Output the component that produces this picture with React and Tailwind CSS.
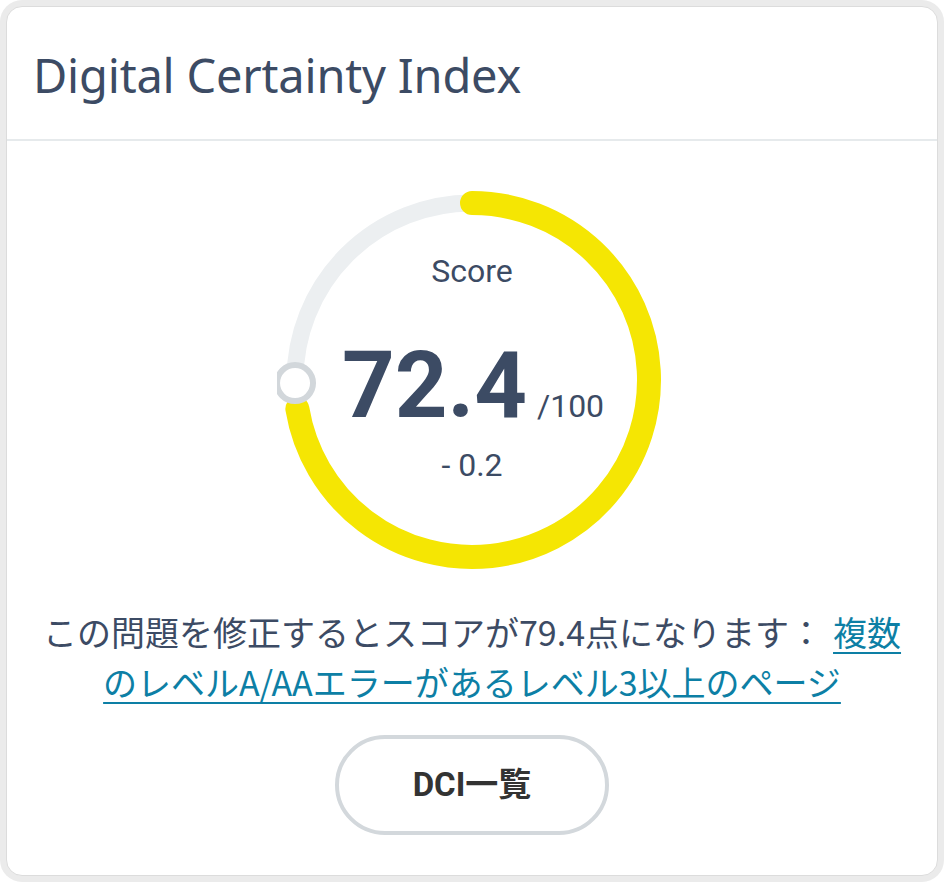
import React from 'react';

const CX = 195;
const CY = 195;
const R = 177;

function polar(deg) {
  const rad = (deg * Math.PI) / 180;
  return [CX + R * Math.sin(rad), CY - R * Math.cos(rad)];
}

function arcPath(from, to) {
  const [x1, y1] = polar(from);
  const [x2, y2] = polar(to);
  const large = to - from > 180 ? 1 : 0;
  return `M ${x1} ${y1} A ${R} ${R} 0 ${large} 1 ${x2} ${y2}`;
}

function Gauge({ score }) {
  const end = (score / 100) * 360;
  const [kx, ky] = polar(269);
  return (
    <div className="relative w-[390px] h-[390px]">
      <svg width="390" height="390" viewBox="0 0 390 390">
        <circle cx={CX} cy={CY} r={R} fill="none" stroke="#eceff1" strokeWidth="17" />
        <path d={arcPath(0, end)} fill="none" stroke="#f5e603" strokeWidth="24" strokeLinecap="round" />
        <circle cx={kx} cy={ky} r="18" fill="#fff" stroke="#d2d7db" strokeWidth="6" />
      </svg>
      <div className="absolute inset-0 flex flex-col items-center pt-[67px] text-[#3c4b64] font-['Roboto',sans-serif]">
        <div className="text-[32px] leading-[38px]">Score</div>
        <div className="mt-[50px] flex items-baseline gap-[10px] pl-[2px]">
          <span className="text-[92px] leading-none font-bold">72.4</span>
          <span className="text-[32px] leading-none">/100</span>
        </div>
        <div className="mt-[14px] text-[32px] leading-[38px]">- 0.2</div>
      </div>
    </div>
  );
}

export default function App() {
  return (
    <div className="w-[944px] h-[882px] bg-white">
      <div className="h-full rounded-[22px] bg-[#ebebeb] p-[6px]">
        <div className="h-full rounded-[16px] bg-white border border-[#dcdcdc] flex flex-col">
          <div className="h-[134px] flex items-center px-[26px] border-b-2 border-[#e6eaec]">
            <h1 className="text-[47px] text-[#3c4b64] font-['Noto_Sans',sans-serif] tracking-[-0.2px] pt-[4px]">
              Digital Certainty Index
            </h1>
          </div>
          <div className="flex flex-col items-center pt-[44px]">
            <Gauge score={72.4} />
            <p className="mt-[32px] text-center text-[34px] leading-[50px] text-[#3c4b64] font-['Noto_Sans_CJK_JP',sans-serif]">
              この問題を修正するとスコアが79.4点になります：
              <a href="#" className="ml-[10px] text-[#0d7fa5] underline underline-offset-[6px] decoration-2">
                複数
                <br />
                のレベルA/AAエラーがあるレベル3以上のページ
              </a>
            </p>
            <button className="mt-[28px] w-[274px] h-[100px] rounded-full border-4 border-[#d3d8dc] bg-white text-[33px] font-bold text-[#333333] font-['Roboto','Noto_Sans_CJK_JP',sans-serif]">
              DCI一覧
            </button>
          </div>
        </div>
      </div>
    </div>
  );
}
